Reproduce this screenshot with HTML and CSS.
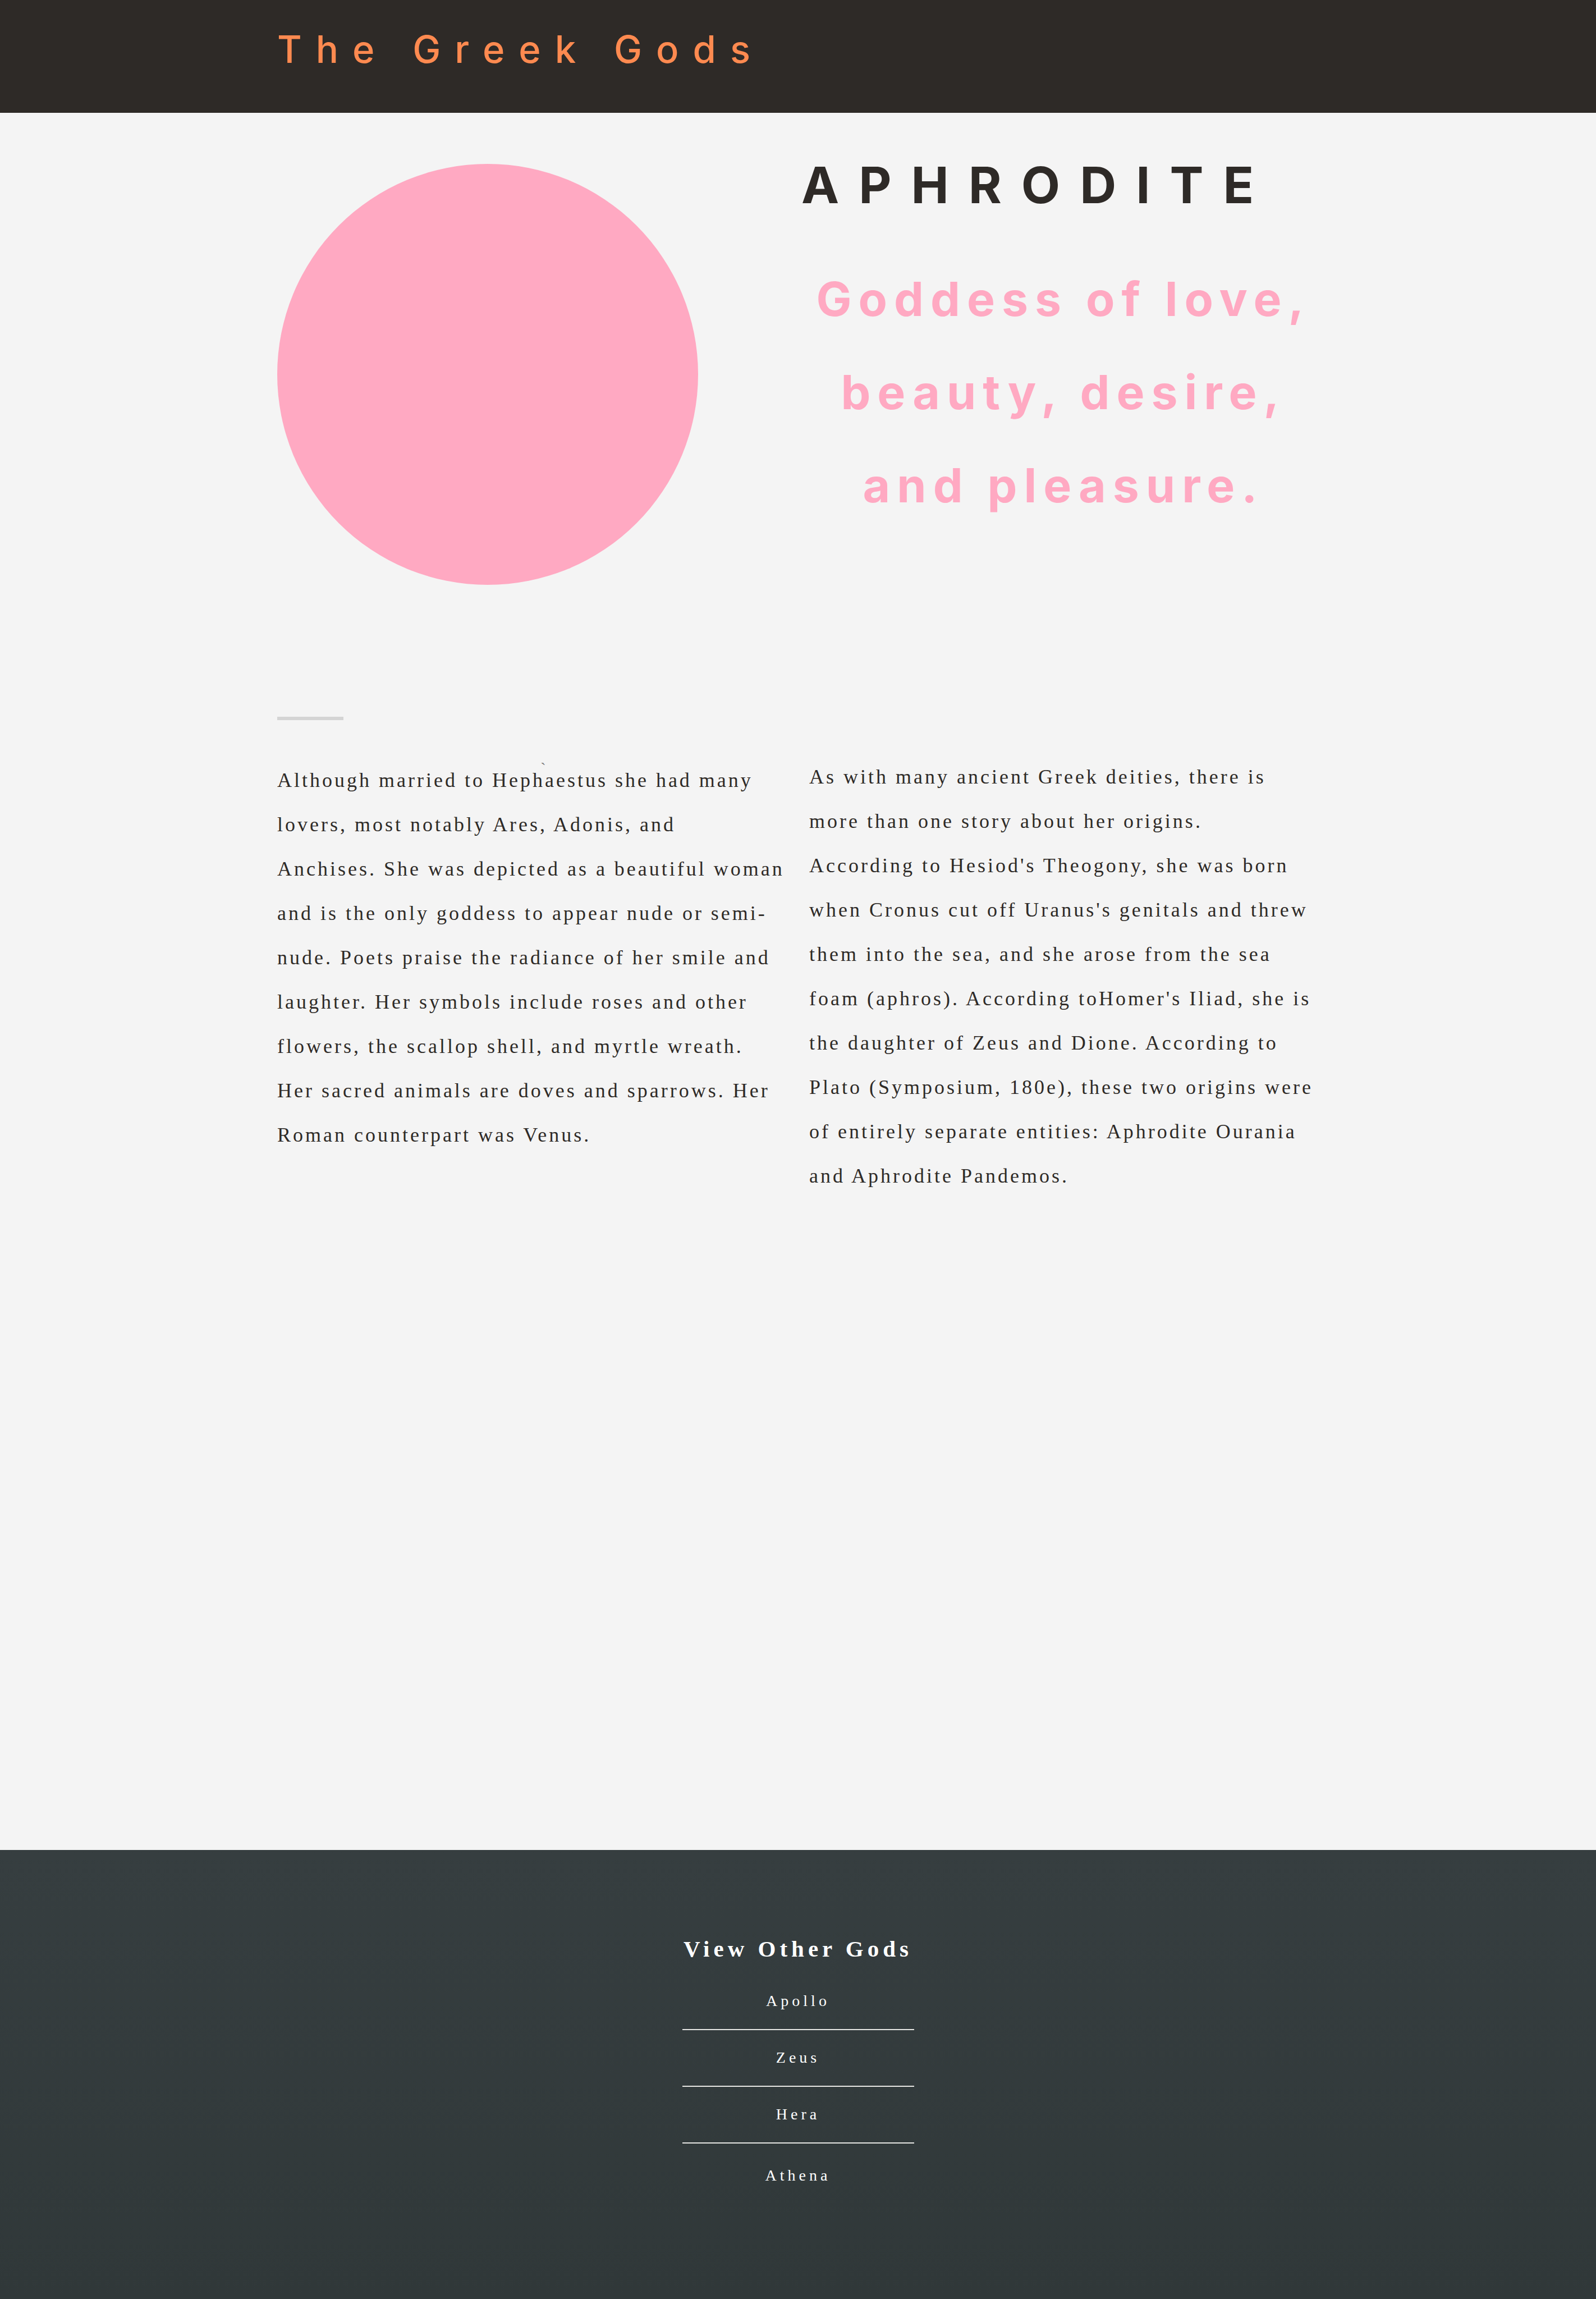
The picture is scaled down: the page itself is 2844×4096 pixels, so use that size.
FILE: index.html
```html
<!DOCTYPE html>
<html lang="en">
<head>
<meta charset="utf-8">
<title>The Greek Gods</title>
<link rel="stylesheet" href="styles.css">
</head>
<body>
<header class="site-header">
  <div class="container"><p class="site-title">The Greek Gods</p></div>
</header>
<main class="container main">
  <section class="hero">
    <div class="portrait"></div>
    <div class="intro">
      <h1 class="name">APHRODITE</h1>
      <h2 class="tagline">Goddess of love,<br>beauty, desire,<br>and pleasure.</h2>
    </div>
  </section>
  <hr class="rule">
  <section class="story">
    <div class="column">
      <div class="tick">`</div>
      <p class="text">Although married to Hephaestus she had many<br>lovers, most notably Ares, Adonis, and<br>Anchises. She was depicted as a beautiful woman<br>and is the only goddess to appear nude or semi-<br>nude. Poets praise the radiance of her smile and<br>laughter. Her symbols include roses and other<br>flowers, the scallop shell, and myrtle wreath.<br>Her sacred animals are doves and sparrows. Her<br>Roman counterpart was Venus.</p>
    </div>
    <div class="column">
      <p class="text">As with many ancient Greek deities, there is<br>more than one story about her origins.<br>According to Hesiod's Theogony, she was born<br>when Cronus cut off Uranus's genitals and threw<br>them into the sea, and she arose from the sea<br>foam (aphros). According toHomer's Iliad, she is<br>the daughter of Zeus and Dione. According to<br>Plato (Symposium, 180e), these two origins were<br>of entirely separate entities: Aphrodite Ourania<br>and Aphrodite Pandemos.</p>
    </div>
  </section>
</main>
<footer class="site-footer">
  <nav class="gods">
    <h3 class="gods-title">View Other Gods</h3>
    <ul class="gods-list">
      <li><a href="#apollo">Apollo</a></li>
      <li><a href="#zeus">Zeus</a></li>
      <li><a href="#hera">Hera</a></li>
      <li><a href="#athena">Athena</a></li>
    </ul>
  </nav>
</footer>
</body>
</html>
```
FILE: styles.css
```css
* {
  box-sizing: border-box;
}

html,
body {
  margin: 0;
  min-height: 100%;
}

body {
  display: flex;
  flex-direction: column;
  min-height: 100vh;
  background: #f4f4f4;
  color: #2e2a27;
  font-family: "Liberation Serif", serif;
}

h1, h2, h3, p, ul {
  margin: 0;
  padding: 0;
}

.container {
  width: 100%;
  max-width: 1856px;
  margin: 0 auto;
}

.site-header {
  background: #2e2a27;
  padding: 48px 0 73px;
}

.site-title {
  color: #ff8a50;
  font: 500 67px/80px Inter, sans-serif;
  letter-spacing: 25px;
}

.main {
  flex: 1;
  padding-top: 91px;
}

.hero {
  display: grid;
  grid-template-columns: 934px 1fr;
}

.portrait {
  width: 750px;
  height: 750px;
  border-radius: 50%;
  background: #ffa9c2;
}

.name {
  font: 700 90px/108px Inter, sans-serif;
  letter-spacing: 35px;
  margin-top: -16px;
}

.tagline {
  margin-top: 66px;
  margin-left: 12px;
  color: #ffa9c2;
  font: 700 84px/166px Inter, sans-serif;
  letter-spacing: 12px;
  text-align: center;
}

.rule {
  width: 118px;
  height: 6px;
  margin: 235px 0 0;
  border: 0;
  background: #d4d4d4;
}

.story {
  display: grid;
  grid-template-columns: 948px 1fr;
  padding-top: 62px;
}

.tick {
  height: 6px;
  color: #777;
  font-size: 28px;
  line-height: 48px;
  text-align: center;
}

.text {
  font-size: 36px;
  line-height: 79px;
  letter-spacing: 4px;
  white-space: nowrap;
}

.site-footer {
  display: flex;
  justify-content: center;
  padding: 152px 0 176px;
  background: linear-gradient(#363e40, #303839);
  color: #fff;
}

.gods {
  width: 413px;
}

.gods-title {
  font-size: 41px;
  line-height: 48px;
  letter-spacing: 7px;
  text-align: center;
  white-space: nowrap;
}

.gods-list {
  list-style: none;
  padding-top: 20px;
}

.gods-list li {
  height: 101px;
  border-bottom: 2px solid #e6e6e3;
  text-align: center;
}

.gods-list li:last-child {
  border-bottom: 0;
  padding-top: 8px;
}

.gods-list a {
  display: block;
  color: #fff;
  font-size: 28px;
  line-height: 97px;
  letter-spacing: 6px;
  text-decoration: none;
}
```
